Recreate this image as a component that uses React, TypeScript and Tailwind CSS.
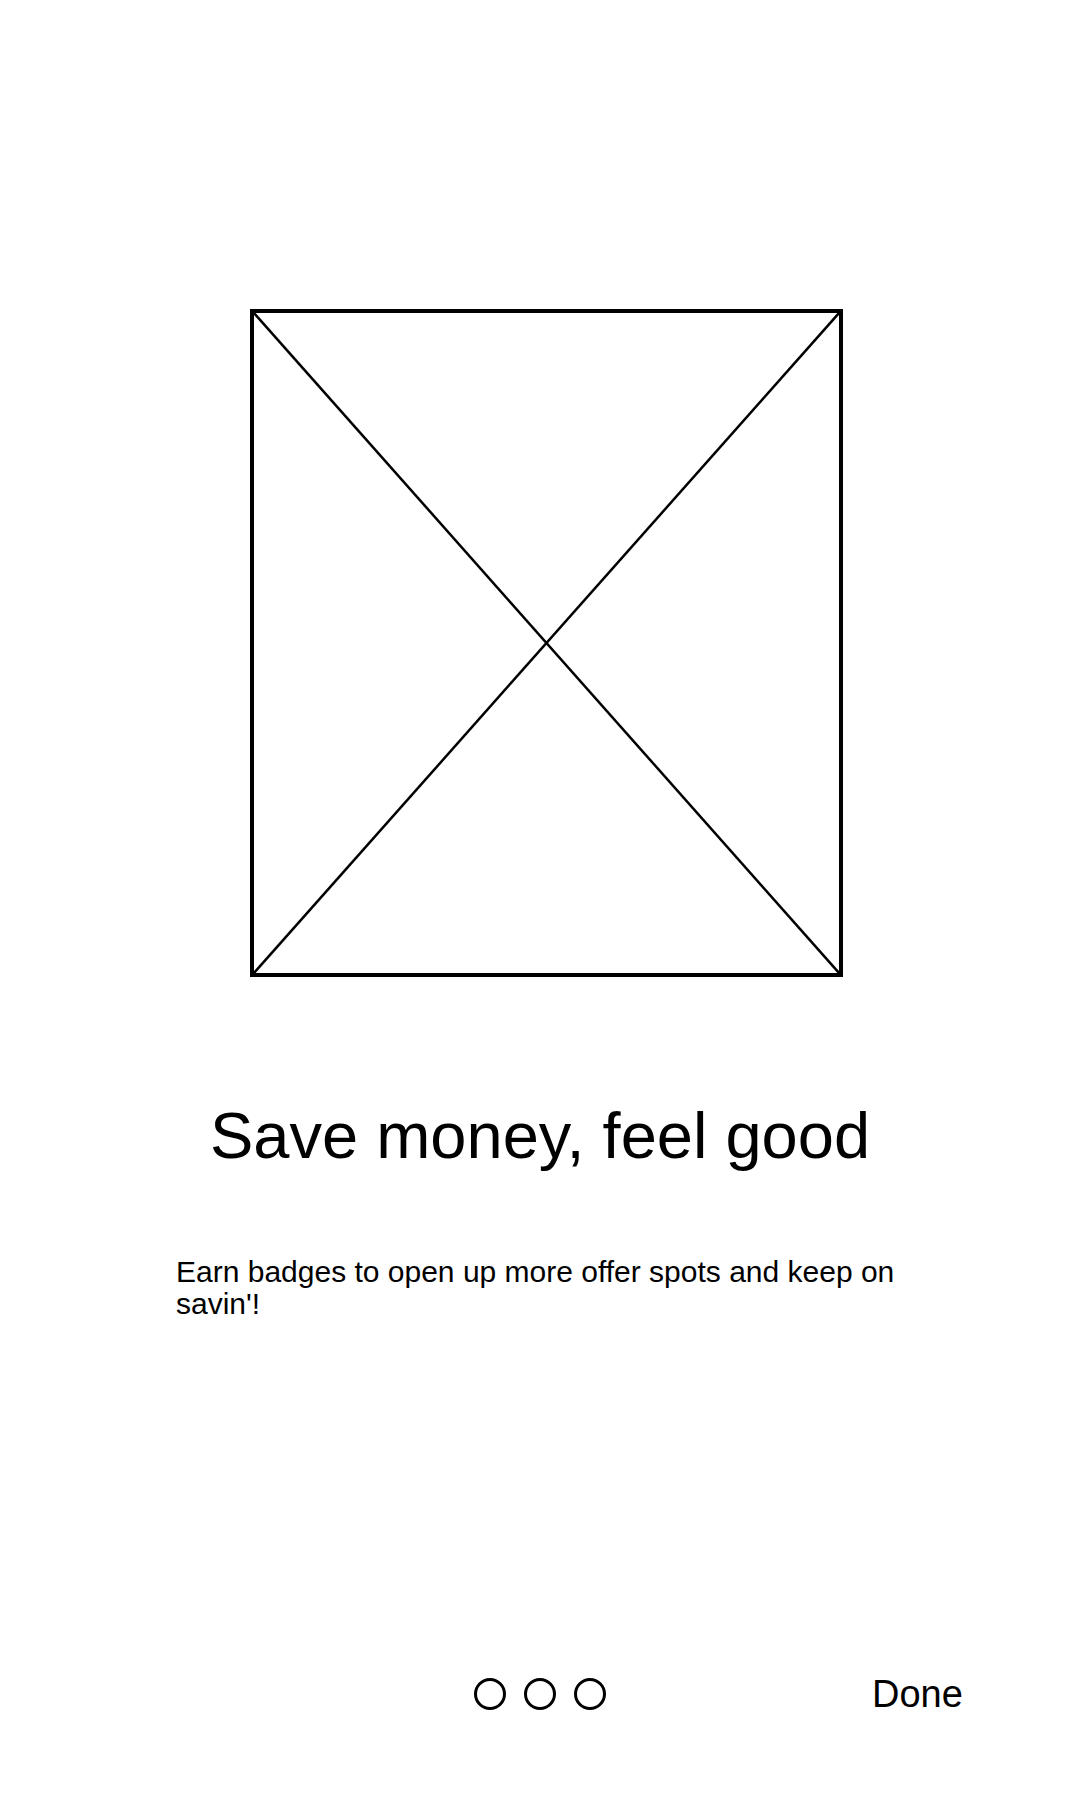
export default function App() {
  return (
    <div className="w-[1080px] h-[1800px] bg-white flex flex-col items-center text-black font-['Liberation_Sans',Arial,sans-serif]">
      {/* image placeholder */}
      <div className="mt-[309px] self-start ml-[250px] w-[593px] h-[668px] border-4 border-black">
        <svg width="585" height="660" viewBox="0 0 585 660" className="block">
          <line x1="0" y1="0" x2="585" y2="660" stroke="black" strokeWidth="2.5" />
          <line x1="585" y1="0" x2="0" y2="660" stroke="black" strokeWidth="2.5" />
        </svg>
      </div>

      <h1 className="mt-[127px] h-[64px] text-[65px] leading-[64px] font-normal">Save money, feel good</h1>

      <p className="mt-[88px] w-[728px] text-[30px] leading-[32px]">
        Earn badges to open up more offer spots and keep on savin'!
      </p>

      {/* pager */}
      <div className="mt-[355px] w-full grid grid-cols-[1fr_auto_1fr] items-center">
        <div />
        <div className="flex gap-[18px]">
          <span className="w-[32px] h-[32px] rounded-full border-[3px] border-black" />
          <span className="w-[32px] h-[32px] rounded-full border-[3px] border-black" />
          <span className="w-[32px] h-[32px] rounded-full border-[3px] border-black" />
        </div>
        <button className="justify-self-start ml-[266px] text-[38px] leading-none h-[38px]">Done</button>
      </div>
    </div>
  );
}
